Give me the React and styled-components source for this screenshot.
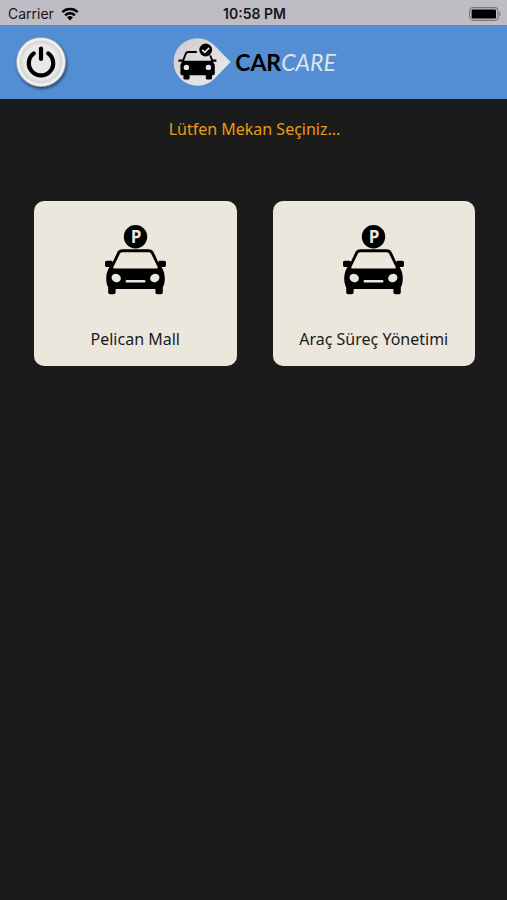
import React from 'react';
import styled, { createGlobalStyle } from 'styled-components';

const theme = {
  background: '#1b1b1b',
  statusBar: '#bfbdc4',
  header: '#538ed5',
  card: '#ebe7dd',
  accent: '#e69c14',
  black: '#000000',
};

const PLACES = [
  { id: 1, name: 'Pelican Mall' },
  { id: 2, name: 'Araç Süreç Yönetimi' },
];

const WifiIcon = () => (
  <svg width="18" height="14" viewBox="0 0 18 14" aria-hidden="true">
    <g fill="none" stroke="#000" strokeWidth="2.4">
      <path d="M1.3 5.1a11 11 0 0 1 15.4 0" />
      <path d="M4.1 8.3a7 7 0 0 1 9.8 0" />
    </g>
    <path d="M9 13.4l-2.9-3a4.1 4.1 0 0 1 5.8 0z" />
  </svg>
);

const BatteryIcon = () => (
  <svg width="32" height="14" viewBox="0 0 32 14" aria-hidden="true">
    <rect
      x="0.6"
      y="0.6"
      width="28.4"
      height="12.8"
      rx="3.4"
      fill="none"
      stroke="#77767b"
      strokeWidth="1.1"
    />
    <rect x="2.6" y="2.5" width="24.4" height="9" rx="1.2" />
    <path d="M30.2 4.8c1.8.6 1.8 3.8 0 4.4z" fill="#77767b" />
  </svg>
);

const PowerIcon = () => (
  <svg width="30" height="32" viewBox="0 0 30 32" aria-hidden="true">
    <g fill="none" stroke="#000" strokeWidth="4.2" strokeLinecap="round">
      <path d="M7.8 7.4a12.2 12.2 0 1 0 14.4 0" />
      <path d="M15 2.6v10.4" />
    </g>
  </svg>
);

const LogoMark = () => (
  <svg width="58" height="48" viewBox="0 0 58 48" aria-hidden="true">
    <defs>
      <linearGradient id="logoShade" x1="0" y1="0" x2="1" y2="1">
        <stop offset="0" stopColor="#c9c9cb" />
        <stop offset="0.5" stopColor="#dededf" />
        <stop offset="1" stopColor="#ececec" />
      </linearGradient>
    </defs>
    <path
      d="M57.6 24L41.6 40.4A23.8 23.8 0 1 1 41.6 7.6z"
      fill="url(#logoShade)"
    />
    <path
      d="M10.2 22.4l2.6-6.8q.6-1.600 2.400-1.600h8.600M37.200 17.400l2 5"
      fill="none"
      stroke="#000"
      strokeWidth="1.8"
    />
    <path d="M5.4 21.4h4.400l1.600 1.400h26l1.600-1.400h4.400v2.400h-3.400l1.800 3v8.800q0 1.600-1.600 1.600h-1.200v3q0 1.400-1.400 1.400h-3.400q-1.400 0-1.400-1.400v-3H16.600v3q0 1.400-1.400 1.400H11.800q-1.400 0-1.400-1.400v-3H9q-1.600 0-1.600-1.600v-8.800l1.600-3H5.400z" />
    <circle cx="13.4" cy="29.4" r="2.7" fill="#e6e6e6" />
    <circle cx="35.4" cy="29.4" r="2.7" fill="#e6e6e6" />
    <circle cx="32.7" cy="12" r="6.4" />
    <path
      d="M29.2 11.8l2.6 2.5 4.4-4.4"
      fill="none"
      stroke="#e2e2e2"
      strokeWidth="1.7"
    />
  </svg>
);

const ParkingIcon = () => (
  <svg width="61" height="70" viewBox="0 0 61 70" aria-hidden="true">
    <circle cx="30.5" cy="11.8" r="11.7" />
    <PinLetter x="31" y="18">
      P
    </PinLetter>
    <path
      fillRule="evenodd"
      d="M17.6 24.2h25.800c2.600 0 4.400 1 5.400 3.200l4.400 9.600c.6-1 1.200-1.200 2-1.200h4c1 0 1.800.8 1.800 1.800v2.600c0 1-.8 1.800-1.800 1.800h-2.600c2.400 4 3.200 7.400 3.200 11.800 0 3.600-.8 6.400-2 8.600v4.800c0 1.200-.8 2-2 2h-3.400c-1.200 0-2-.8-2-2v-3.200h-39.800v3.200c0 1.200-.8 2-2 2h-3.400c-1.200 0-2-.8-2-2v-4.800c-1.200-2.200-2-5-2-8.600 0-4.400.8-7.800 3.200-11.800h-2.600c-1 0-1.800-.8-1.800-1.800v-2.600c0-1 .8-1.800 1.800-1.800h4c.8 0 1.400.2 2 1.200l4.400-9.600c1-2.200 2.800-3.200 5.400-3.200zM18 27.200c-1.800 0-2.800.6-3.400 2l-6 12.400c-.6 1.400-.2 2 1 2h41.800c1.200 0 1.600-.6 1-2l-6-12.400c-.6-1.400-1.600-2-3.400-2z"
    />
    <g fill={theme.card}>
      <ellipse cx="11.2" cy="53" rx="4.8" ry="4" transform="rotate(25 11.2 53)" />
      <ellipse cx="49.8" cy="53" rx="4.8" ry="4" transform="rotate(-25 49.8 53)" />
      <rect x="20.6" y="55" width="19.8" height="2.4" rx="1.2" />
    </g>
  </svg>
);

const PlaceCard = ({ name }) => (
  <Card type="button">
    <ParkingIcon />
    <PlaceName>{name}</PlaceName>
  </Card>
);

const App = () => {
  return (
    <>
      <GlobalStyle />
      <StatusBar>
        <Carrier>
          Carrier
          <WifiIcon />
        </Carrier>
        <Clock>10:58 PM</Clock>
        <Battery>
          <BatteryIcon />
        </Battery>
      </StatusBar>
      <Header>
        <PowerButton type="button" aria-label="Çıkış">
          <PowerIcon />
        </PowerButton>
        <Logo>
          <LogoMark />
          <LogoText>
            CAR<LogoAccent>CARE</LogoAccent>
          </LogoText>
        </Logo>
      </Header>
      <Main>
        <Title>Lütfen Mekan Seçiniz...</Title>
        <PlaceGrid>
          {PLACES.map(place => (
            <PlaceCard key={place.id} name={place.name} />
          ))}
        </PlaceGrid>
      </Main>
    </>
  );
};

export default App;

const GlobalStyle = createGlobalStyle`
  * {
    box-sizing: border-box;
  }

  body {
    margin: 0;
    background: ${theme.background};
    font-family: 'Noto Sans', 'Open Sans', sans-serif;
  }
`;

const StatusBar = styled.div`
  display: grid;
  grid-template-columns: 1fr auto 1fr;
  align-items: center;
  height: 25px;
  padding: 2px 6px 0 8px;
  background: ${theme.statusBar};
  color: #16161a;
  font-family: Inter, sans-serif;
  font-size: 14px;
`;

const Carrier = styled.div`
  display: flex;
  align-items: center;
  gap: 7px;
`;

const Clock = styled.time`
  font-weight: 600;
`;

const Battery = styled.div`
  display: flex;
  justify-content: flex-end;
`;

const Header = styled.header`
  display: grid;
  grid-template-columns: 1fr auto 1fr;
  align-items: center;
  height: 74px;
  padding: 0 14px 0 16px;
  background: ${theme.header};
`;

const PowerButton = styled.button`
  display: flex;
  justify-content: center;
  align-items: center;
  width: 50px;
  height: 50px;
  padding: 0;
  border: 1px solid #a9a9ab;
  border-radius: 50%;
  background: radial-gradient(
    circle,
    #e9e9e9 0 50%,
    #d6d6d6 60%,
    #f6f6f6 68%
  );
  box-shadow: 1px 2px 3px rgba(0, 0, 0, 0.5);
  cursor: pointer;
`;

const Logo = styled.div`
  display: flex;
  align-items: center;
  gap: 4px;
`;

const LogoText = styled.span`
  color: ${theme.black};
  font-family: Lato, sans-serif;
  font-size: 23px;
  font-weight: 700;
  line-height: 28px;
`;

const LogoAccent = styled.span`
  color: #dfe3ea;
  font-style: italic;
  font-weight: 400;
`;

const Main = styled.main`
  padding: 18px 32px 0 34px;
`;

const Title = styled.h1`
  margin: 0;
  color: ${theme.accent};
  font-size: 16px;
  font-weight: 400;
  line-height: 24px;
  text-align: center;
`;

const PlaceGrid = styled.div`
  display: grid;
  grid-template-columns: 1fr 1fr;
  gap: 36px;
  margin-top: 60px;
`;

const Card = styled.button`
  display: flex;
  flex-direction: column;
  align-items: center;
  gap: 32px;
  padding: 24px 8px 15px;
  border: 0;
  border-radius: 10px;
  background: ${theme.card};
  color: #1a1a1a;
  font: inherit;
  cursor: pointer;
`;

const PlaceName = styled.span`
  font-size: 16px;
  line-height: 24px;
`;

const PinLetter = styled.text`
  fill: ${theme.card};
  font-family: 'Open Sans', sans-serif;
  font-size: 17px;
  font-weight: 700;
  text-anchor: middle;
`;
